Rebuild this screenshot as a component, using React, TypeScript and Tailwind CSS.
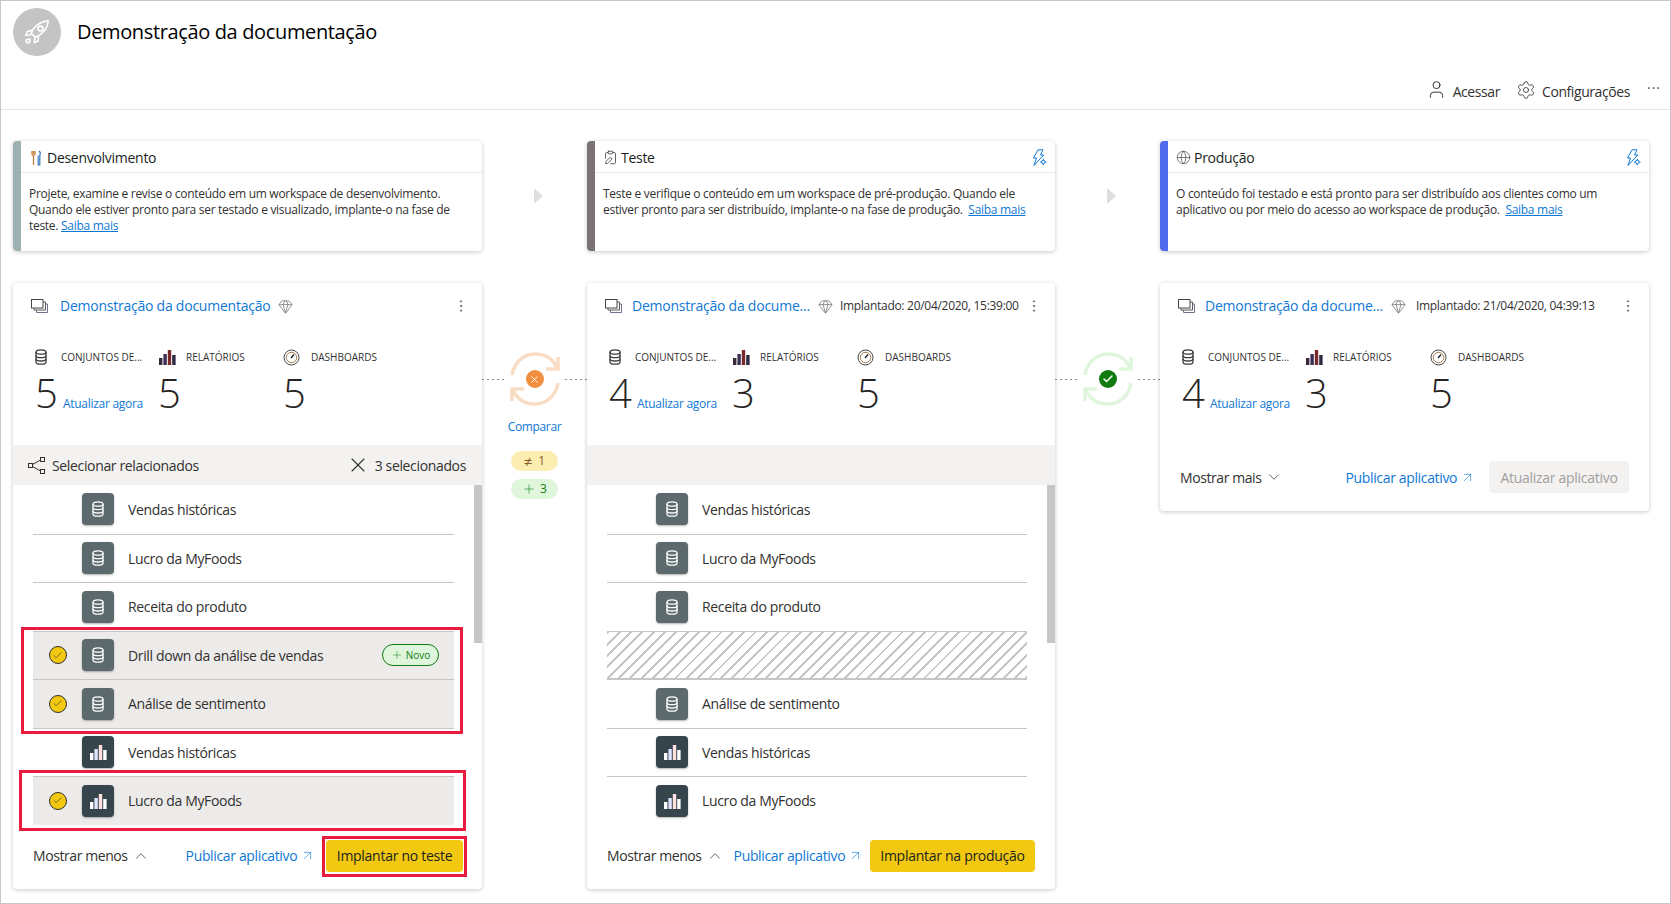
import React from "react";
import { User, Settings, Gem, MoreVertical, X, Check, Plus, ChevronUp, ChevronDown, ArrowUpRight, Globe, ClipboardPen } from "lucide-react";

const BLUE = "text-[#0f78d4]";

const RocketIcon = () => (
  <svg width="30" height="30" viewBox="0 0 28 28" fill="none" stroke="#fff" strokeWidth="1.500" strokeLinejoin="round">
    <path d="M24.500 3.500C17 4 11 9 8.500 15l4 4c6-2.500 11.500-8 12-15.500z" />
    <circle cx="17.200" cy="10.800" r="2.300" />
    <path d="M9.500 12.500 5 13.500l-1.500 3.500 5-.5" />
    <path d="M15.500 18l-.5 4.500-3.500 1.500.5-5" />
    <circle cx="5.500" cy="22.500" r="1.700" />
    <path d="M8 20l-.8.8" />
  </svg>
);

const DbIcon = ({ color, w = 12, h = 16 }: { color: string; w?: number; h?: number }) => (
  <svg width={w} height={h} viewBox="0 0 12 16" fill="none" stroke={color} strokeWidth="1.300">
    <ellipse cx="6" cy="3" rx="5" ry="2.200" />
    <path d="M1 3v10c0 1.200 2.200 2.200 5 2.200s5-1 5-2.200V3" />
    <path d="M1 6.400c0 1.200 2.200 2.200 5 2.200s5-1 5-2.200M1 9.800c0 1.200 2.200 2.200 5 2.200s5-1 5-2.200" />
  </svg>
);

const StackIcon = () => (
  <svg width="17" height="15" viewBox="0 0 17 15" fill="none" strokeWidth="1">
    <rect x="0.500" y="0.500" width="11.500" height="8.500" stroke="#444" />
    <path d="M12 3h2.500v8H3V9" stroke="#555" />
    <path d="M14.500 5h2v8.500H5.500V11" stroke="#7a6a8a" />
  </svg>
);

const RelatedIcon = () => (
  <svg width="17" height="17" viewBox="0 0 17 17" fill="none" stroke="#323130" strokeWidth="1">
    <rect x="0.500" y="6.500" width="4" height="4" />
    <rect x="12.500" y="0.500" width="4" height="4" />
    <rect x="12.500" y="12.500" width="4" height="4" />
    <path d="M4.500 7.500l8-4.500M4.500 9.500l8 4.500" />
  </svg>
);

const Bars = ({ light }: { light?: boolean }) => (
  <svg width="18" height="16" viewBox="0 0 18 16">
    <rect x="1" y="9" width="3.400" height="7" fill={light ? "#fff" : "#3b2a3a"} />
    <rect x="5.400" y="5" width="3.400" height="11" fill={light ? "#dfe3ff" : "#3a2f55"} />
    <rect x="9.800" y="1" width="3.400" height="15" fill={light ? "#ffe2e0" : "#7a2a2a"} />
    <rect x="14.200" y="6" width="3.400" height="10" fill={light ? "#fff" : "#2a2a40"} />
  </svg>
);

const Gauge = () => (
  <svg width="17" height="17" viewBox="0 0 17 17" fill="none" stroke="#444" strokeWidth="1">
    <circle cx="8.500" cy="8.500" r="7.500" />
    <circle cx="8.500" cy="8.500" r="5.200" stroke="#a67c52" />
    <path d="M8 9l3-3.500" stroke="#222" strokeWidth="1.400" />
  </svg>
);

const Tools = () => (
  <svg width="11" height="16" viewBox="0 0 11 16" fill="none" strokeWidth="1.200">
    <path d="M2.500 1v3M1 1v3c0 1 .7 1.400 1.500 1.400S4 5 4 4V1M2.500 5.500V15" stroke="#c77b30" />
    <path d="M8 1c1.500 1 1.500 3 .8 4.500V15h-1.600V5.500" stroke="#3b7dbd" />
  </svg>
);

const BoltGear = () => (
  <svg width="16" height="18" viewBox="0 0 16 18" fill="none" stroke="#0f78d4" strokeWidth="1">
    <path d="M7 .8h5L9.500 6h3.200L3 16.500l2.500-7.500H2.500z" />
    <circle cx="12.300" cy="13" r="1.800" fill="#fff" />
    <path d="M12.300 9.800v1.400M12.300 14.800v1.400M9.100 13h1.400M14.100 13h1.400" />
  </svg>
);

const Sync = ({ color }: { color: string }) => (
  <svg width="56" height="56" viewBox="0 0 54 56" fill="none" stroke={color} strokeWidth="3.500">
    <path d="M4 24C6 12 15 3 27 3c10 0 18 5 22 14" />
    <path d="M50 6v12H38" />
    <path d="M50 32c-2 12-11 21-23 21-10 0-18-5-22-14" />
    <path d="M4 50V38h12" />
  </svg>
);

const Dotted = () => (
  <div className="h-px flex-1 bg-[repeating-linear-gradient(90deg,#8a8886_0,#8a8886_2px,transparent_2px,transparent_5px)]" />
);

type Phase = {
  title: string;
  icon: React.ReactNode;
  stripe: string;
  lines: string[];
  bolt?: boolean;
};

const phases: Phase[] = [
  {
    title: "Desenvolvimento",
    icon: <Tools />,
    stripe: "bg-[#9fb0b3]",
    lines: [
      "Projete, examine e revise o conteúdo em um workspace de desenvolvimento.",
      "Quando ele estiver pronto para ser testado e visualizado, implante-o na fase de",
      "teste. ",
    ],
  },
  {
    title: "Teste",
    icon: <ClipboardPen size={15} strokeWidth={1.300} color="#444" />,
    stripe: "bg-[#7a7574]",
    lines: [
      "Teste e verifique o conteúdo em um workspace de pré-produção. Quando ele",
      "estiver pronto para ser distribuído, implante-o na fase de produção.\u00a0 ",
    ],
    bolt: true,
  },
  {
    title: "Produção",
    icon: <Globe size={15} strokeWidth={1.100} color="#444" />,
    stripe: "bg-[#4f6bed]",
    lines: [
      "O conteúdo foi testado e está pronto para ser distribuído aos clientes como um",
      "aplicativo ou por meio do acesso ao workspace de produção.\u00a0 ",
    ],
    bolt: true,
  },
];

const PhaseCard = ({ p }: { p: Phase }) => (
  <div className="flex h-[110px] overflow-hidden rounded-sm bg-white shadow-[0_1px_4px_rgba(0,0,0,0.22)]">
    <div className={`w-2 shrink-0 ${p.stripe}`} />
    <div className="flex-1">
      <div className="flex h-[32px] items-center border-b border-[#e8e8e8] pl-[8px] pr-[8px] pt-[2px]">
        <span className="mr-[3px] flex w-[15px] justify-center">{p.icon}</span>
        <span className="text-[14px] font-medium tracking-[-0.02em] text-[#201f1e]">{p.title}</span>
        {p.bolt && <span className="ml-auto"><BoltGear /></span>}
      </div>
      <div className="px-[8px] pt-[13px] text-[12px] leading-[16px] tracking-[-0.024em] text-[#323130]">
        {p.lines.map((line, i) => (
          <p key={i} className="whitespace-nowrap">
            {line}
            {i === p.lines.length - 1 && <a className={`${BLUE} underline`}>Saiba mais</a>}
          </p>
        ))}
      </div>
    </div>
  </div>
);

const Arrow = () => (
  <div className="flex items-center justify-center pl-[8px]">
    <div className="h-0 w-0 border-y-[8px] border-l-[9px] border-y-transparent border-l-[#e1dfdd]" />
  </div>
);

const Metrics = ({ ds, reports }: { ds: number; reports: number }) => (
  <div className="grid grid-cols-[123px_125px_1fr] pl-[22px] pt-[32px]">
    <div>
      <div className="flex h-[16px] items-center">
        <span className="w-[26px] shrink-0"><DbIcon color="#3b3a39" /></span>
        <span className="whitespace-nowrap text-[10px] text-[#323130]">CONJUNTOS DE...</span>
      </div>
      <div className="mt-[4px] flex items-start">
        <span className="w-[26px] text-[40px] font-light leading-[48px] text-[#252423]">{ds}</span>
        <a className={`${BLUE} mt-[26px] whitespace-nowrap pl-[2px] text-[12px] leading-[18px] tracking-[-0.024em]`}>Atualizar agora</a>
      </div>
    </div>
    <div>
      <div className="flex h-[16px] items-center">
        <span className="w-[28px] shrink-0"><Bars /></span>
        <span className="whitespace-nowrap text-[10px] text-[#323130]">RELATÓRIOS</span>
      </div>
      <div className="mt-[4px] text-[40px] font-light leading-[48px] text-[#252423]">{reports}</div>
    </div>
    <div>
      <div className="flex h-[16px] items-center">
        <span className="w-[28px] shrink-0"><Gauge /></span>
        <span className="whitespace-nowrap text-[10px] text-[#323130]">DASHBOARDS</span>
      </div>
      <div className="mt-[4px] text-[40px] font-light leading-[48px] text-[#252423]">5</div>
    </div>
  </div>
);

const CardHead = ({ title, deployed, wide }: { title: string; deployed?: string; wide?: boolean }) => (
  <div className="flex h-[22px] items-center pl-[18px] pr-[13px]">
    <StackIcon />
    <a className={`${BLUE} ${deployed ? "ml-[10px]" : "ml-[12px]"} -translate-y-px whitespace-nowrap text-[14px] font-medium tracking-[-0.017em]`}>{title}</a>
    <Gem size={15} strokeWidth={1} color="#555" className="ml-[8px]" />
    {deployed && <span className={`${wide ? "ml-[10px]" : "ml-[7px]"} whitespace-nowrap text-[12px] tracking-[-0.024em] text-[#323130]`}>{deployed}</span>}
    <MoreVertical size={16} strokeWidth={1.500} color="#666" className="ml-auto" />
  </div>
);

type Row = { name: string; kind: "db" | "chart" | "empty"; selected?: boolean; isNew?: boolean };

const ItemRow = ({ r, first }: { r: Row; first?: boolean }) => {
  if (r.kind === "empty") {
    return <div className="h-[48.500px] border-y border-[#c8c6c4] bg-[repeating-linear-gradient(135deg,#c8c6c4_0,#c8c6c4_2px,#fff_2px,#fff_8px)]" />;
  }
  return (
    <div className={`relative flex h-[48.500px] items-center ${first ? "" : "border-t border-[#c8c6c4]"} ${r.selected ? "bg-[#edebe9]" : ""}`}>
      <span className="flex w-[49px] justify-center">
        {r.selected && (
          <span className="flex h-[18px] w-[18px] items-center justify-center rounded-full border border-[#323130] bg-[#f2c811]">
            <Check size={11} strokeWidth={1.300} color="#323130" />
          </span>
        )}
      </span>
      <span className={`flex h-[32px] w-[32px] items-center justify-center rounded-sm shadow-[0_1px_2px_rgba(0,0,0,0.3)] ${r.kind === "db" ? "bg-[#5c6a6e]" : "bg-[#36454c]"}`}>
        {r.kind === "db" ? <DbIcon color="#fff" /> : <Bars light />}
      </span>
      <span className="ml-[14px] text-[14px] tracking-[-0.025em] text-[#323130]">{r.name}</span>
      {r.isNew && (
        <span className="absolute right-[15px] flex h-[22px] w-[57px] items-center justify-center gap-[3px] rounded-full border border-[#107c10] bg-[#dff6dd] text-[10px] text-[#107c10]">
          <Plus size={12} strokeWidth={1} />Novo
        </span>
      )}
    </div>
  );
};

const devRows: Row[] = [
  { name: "Vendas históricas", kind: "db" },
  { name: "Lucro da MyFoods", kind: "db" },
  { name: "Receita do produto", kind: "db" },
  { name: "Drill down da análise de vendas", kind: "db", selected: true, isNew: true },
  { name: "Análise de sentimento", kind: "db", selected: true },
  { name: "Vendas históricas", kind: "chart" },
  { name: "Lucro da MyFoods", kind: "chart", selected: true },
];

const testRows: Row[] = [
  { name: "Vendas históricas", kind: "db" },
  { name: "Lucro da MyFoods", kind: "db" },
  { name: "Receita do produto", kind: "db" },
  { name: "", kind: "empty" },
  { name: "Análise de sentimento", kind: "db" },
  { name: "Vendas históricas", kind: "chart" },
  { name: "Lucro da MyFoods", kind: "chart" },
];

const List = ({ rows }: { rows: Row[] }) => (
  <div className="relative pl-[20px] pr-[28px]">
    {rows.map((r, i) => (
      <ItemRow key={i} r={r} first={i === 0} />
    ))}
    <div className="absolute right-0 top-0 h-[158px] w-2 bg-[#c8c6c4]" />
  </div>
);

const Publish = () => (
  <a className={`${BLUE} flex items-center gap-[3px] whitespace-nowrap text-[14px] tracking-[-0.025em]`}>
    Publicar aplicativo <ArrowUpRight size={15} strokeWidth={1} />
  </a>
);

const Toggle = ({ label, open }: { label: string; open?: boolean }) => (
  <span className="flex items-center gap-[4px] whitespace-nowrap text-[14px] tracking-[-0.03em] text-[#323130]">
    {label}
    {open ? <ChevronUp size={18} strokeWidth={1} /> : <ChevronDown size={18} strokeWidth={1} />}
  </span>
);

const Connector = ({ bad }: { bad?: boolean }) => (
  <div className="flex flex-col items-center pt-[68px]">
    <div className="flex w-full items-center gap-[2px]">
      <Dotted />
      <div className="relative flex h-[56px] w-[56px] items-center justify-center">
        <Sync color={bad ? "#f9dcc4" : "#dff6dd"} />
        <span className={`absolute flex h-[18px] w-[18px] items-center justify-center rounded-full ${bad ? "bg-[#ef8f3f]" : "bg-[#107c10]"}`}>
          {bad ? <X size={11} strokeWidth={2} color="#fff" /> : <Check size={12} strokeWidth={3} color="#fff" />}
        </span>
      </div>
      <Dotted />
    </div>
    {bad && (
      <>
        <a className={`${BLUE} mt-[11px] text-[12px] tracking-[-0.03em]`}>Comparar</a>
        <span className="mt-[15px] flex h-[20px] w-[47px] items-center justify-center gap-[6px] rounded-full bg-[#fbeeb0] text-[12px] text-[#8a5a2b]"><span className="text-[15px] leading-none">≠</span>1</span>
        <span className="mt-[8px] flex h-[20px] w-[47px] items-center justify-center gap-[4px] rounded-full bg-[#dff6dd] text-[12px] text-[#107c10]">
          <Plus size={14} strokeWidth={1} />3
        </span>
      </>
    )}
  </div>
);

export default function App() {
  return (
    <div className="relative h-[904px] w-full overflow-hidden border border-[#c8c6c4] bg-white font-['Open_Sans',sans-serif]">
      <header className="h-[109px] border-b border-[#e6e6e6]">
        <div className="flex items-center pl-[12px] pt-[7px]">
          <span className="flex h-[48px] w-[48px] items-center justify-center rounded-full bg-[#c4c4c4]">
            <RocketIcon />
          </span>
          <h1 className="ml-[16px] text-[20px] tracking-[-0.018em] text-[#000]">Demonstração da documentação</h1>
        </div>
        <div className="mt-[25px] flex items-center justify-end pr-[9px] text-[14px] tracking-[-0.03em] text-[#323130]">
          <User size={21} strokeWidth={1.100} className="mr-[6px] -translate-y-[2px]" />
          <span className="mr-[16px]">Acessar</span>
          <Settings size={20} strokeWidth={1} className="mr-[6px] -translate-y-[2px]" />
          <span className="mr-[17px]">Configurações</span>
          <span className="-translate-y-[4px] text-[14px] tracking-[1px] text-[#555]">···</span>
        </div>
      </header>

      <div className="grid grid-cols-[469px_105px_468px_105px_489px] pl-[12px] pt-[31px]">
        <PhaseCard p={phases[0]} />
        <Arrow />
        <PhaseCard p={phases[1]} />
        <Arrow />
        <PhaseCard p={phases[2]} />

        <div className="col-span-5 h-[32px]" />

        <section className="h-[606px] rounded-sm bg-white pt-[12px] shadow-[0_1px_4px_rgba(0,0,0,0.22)]">
          <CardHead title="Demonstração da documentação" />
          <Metrics ds={5} reports={5} />
          <div className="mt-[28px] flex h-[40px] items-center bg-[#f3f2f1] pl-[15px] pr-[16px] text-[14px] tracking-[-0.025em] text-[#323130]">
            <RelatedIcon />
            <span className="ml-[7px]">Selecionar relacionados</span>
            <X size={24} strokeWidth={1.100} className="ml-auto mr-[5px]" />
            3 selecionados
          </div>
          <List rows={devRows} />
          <div className="flex h-[62px] items-center pl-[20px] pr-[19px]">
            <Toggle label="Mostrar menos" open />
            <span className="ml-[36px]"><Publish /></span>
            <button className="ml-auto h-[32px] w-[137px] rounded-sm bg-[#f2c811] text-[14px] font-medium tracking-[-0.02em] text-[#201f1e]">Implantar no teste</button>
          </div>
        </section>

        <Connector bad />

        <section className="h-[606px] rounded-sm bg-white pt-[12px] shadow-[0_1px_4px_rgba(0,0,0,0.22)]">
          <CardHead title="Demonstração da docume..." deployed="Implantado: 20/04/2020, 15:39:00" />
          <Metrics ds={4} reports={3} />
          <div className="mt-[28px] h-[40px] bg-[#f3f2f1]" />
          <List rows={testRows} />
          <div className="flex h-[62px] items-center pl-[20px] pr-[20px]">
            <Toggle label="Mostrar menos" open />
            <span className="ml-[10px]"><Publish /></span>
            <button className="ml-auto h-[32px] w-[165px] rounded-sm bg-[#f2c811] text-[14px] font-medium tracking-[-0.02em] text-[#201f1e]">Implantar na produção</button>
          </div>
        </section>

        <Connector />

        <section className="h-[228px] rounded-sm bg-white pt-[12px] shadow-[0_1px_4px_rgba(0,0,0,0.22)]">
          <CardHead title="Demonstração da docume..." deployed="Implantado: 21/04/2020, 04:39:13" wide />
          <Metrics ds={4} reports={3} />
          <div className="mt-[44px] flex items-center pl-[20px] pr-[20px]">
            <Toggle label="Mostrar mais" />
            <span className="ml-[62px]"><Publish /></span>
            <button className="ml-auto h-[32px] w-[140px] rounded-sm bg-[#f3f2f1] text-[14px] font-medium tracking-[-0.02em] text-[#a19f9d]">Atualizar aplicativo</button>
          </div>
        </section>
      </div>

      {/* caixas vermelhas por cima da lista */}
      <div className="absolute left-[20px] top-[626px] h-[107px] w-[442px] border-[3px] border-[#e81c3c]" />
      <div className="absolute left-[18px] top-[769px] h-[61px] w-[447px] border-[3px] border-[#e81c3c]" />
      <div className="absolute left-[321px] top-[835px] h-[41px] w-[145px] border-[3px] border-[#e81c3c]" />
    </div>
  );
}
